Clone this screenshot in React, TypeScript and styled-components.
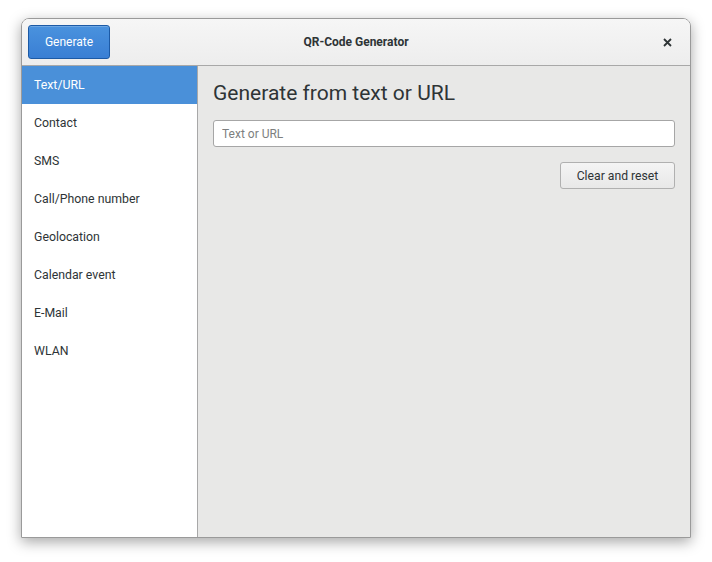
import styled, { createGlobalStyle } from 'styled-components';

const GlobalStyle = createGlobalStyle`
  html, body {
    margin: 0;
    padding: 0;
    background: #ffffff;
    font-family: Roboto, 'Noto Sans', sans-serif;
  }
`;

const Page = styled.div`
  width: 712px;
  height: 562px;
  padding: 18px 0 0 21px;
  box-sizing: border-box;
`;

const Window = styled.div`
  width: 670px;
  height: 520px;
  display: flex;
  flex-direction: column;
  border: 1px solid #9a9a9a;
  border-radius: 8px 8px 0 0;
  box-sizing: border-box;
  overflow: hidden;
  box-shadow: 0 4px 14px rgba(0, 0, 0, 0.35);
`;

const HeaderBar = styled.div`
  height: 47px;
  box-sizing: border-box;
  flex-shrink: 0;
  display: grid;
  grid-template-columns: 1fr auto 1fr;
  align-items: center;
  padding: 0 6px;
  background: linear-gradient(#f6f6f6, #ededed);
  border-bottom: 1px solid #a8a8a8;
`;

const GenerateButton = styled.button`
  justify-self: start;
  width: 82px;
  height: 34px;
  border: 1px solid #1c5aa6;
  border-radius: 3px;
  background: linear-gradient(#4a92de, #3a7fd4);
  color: #ffffff;
  font-family: Roboto, sans-serif;
  font-size: 12px;
  padding: 0;
  box-shadow: inset 0 1px 0 rgba(255, 255, 255, 0.2);
`;

const Title = styled.div`
  font-size: 12px;
  font-weight: bold;
  color: #2e3436;
`;

const CloseButton = styled.div`
  justify-self: end;
  width: 26px;
  display: flex;
  justify-content: center;
  margin-right: 4px;
`;

const Body = styled.div`
  flex: 1;
  display: flex;
  min-height: 0;
`;

const Sidebar = styled.div`
  width: 175px;
  flex-shrink: 0;
  background: #ffffff;
  border-right: 1px solid #a8a8a8;
`;

const SideItem = styled.div<{ $active?: boolean }>`
  height: 38px;
  display: flex;
  align-items: center;
  padding-left: 12px;
  font-size: 12.3px;
  color: ${(p) => (p.$active ? '#ffffff' : '#2e3436')};
  background: ${(p) => (p.$active ? '#4a90d9' : 'transparent')};
`;

const Content = styled.div`
  flex: 1;
  background: #e8e8e7;
  padding: 13px 15px 0 15px;
  display: flex;
  flex-direction: column;
`;

const Heading = styled.h1`
  margin: 0;
  font-size: 21px;
  font-weight: normal;
  color: #2e3436;
  line-height: 28px;
`;

const TextInput = styled.input`
  margin-top: 13px;
  height: 27px;
  box-sizing: border-box;
  border: 1px solid #a6a6a6;
  border-radius: 3px;
  background: #ffffff;
  padding: 0 8px;
  font-family: Roboto, sans-serif;
  font-size: 12px;
  color: #2e3436;
  &::placeholder {
    color: #7d7f7f;
  }
`;

const Actions = styled.div`
  margin-top: 15px;
  display: flex;
  justify-content: flex-end;
`;

const ResetButton = styled.button`
  width: 115px;
  height: 27px;
  border: 1px solid #b0b0b0;
  border-radius: 3px;
  background: linear-gradient(#f4f4f4, #e8e8e8);
  color: #2e3436;
  font-family: Roboto, sans-serif;
  font-size: 12.2px;
  padding: 0;
`;

const items = ['Text/URL', 'Contact', 'SMS', 'Call/Phone number', 'Geolocation', 'Calendar event', 'E-Mail', 'WLAN'];

const App = () => {
  return (
    <>
      <GlobalStyle />
      <Page>
        <Window>
          <HeaderBar>
            <GenerateButton>Generate</GenerateButton>
            <Title>QR-Code Generator</Title>
            <CloseButton>
              <svg width="9" height="9" viewBox="0 0 9 9">
                <path d="M1 1 L8 8 M8 1 L1 8" stroke="#2e3436" strokeWidth="1.8" strokeLinecap="butt" />
              </svg>
            </CloseButton>
          </HeaderBar>
          <Body>
            <Sidebar>
              {items.map((item, i) => (
                <SideItem key={item} $active={i === 0}>
                  {item}
                </SideItem>
              ))}
            </Sidebar>
            <Content>
              <Heading>Generate from text or URL</Heading>
              <TextInput placeholder="Text or URL" />
              <Actions>
                <ResetButton>Clear and reset</ResetButton>
              </Actions>
            </Content>
          </Body>
        </Window>
      </Page>
    </>
  );
};

export default App;
